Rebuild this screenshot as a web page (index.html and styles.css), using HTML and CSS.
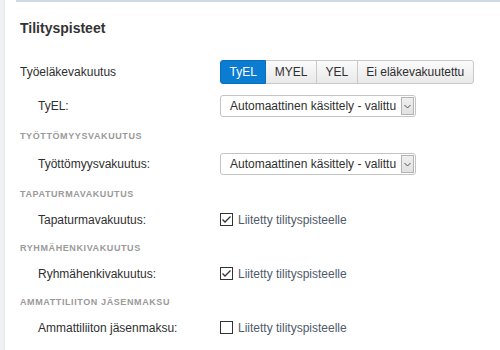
FILE: index.html
```html
<!DOCTYPE html>
<html lang="fi">
<head>
  <meta charset="UTF-8">
  <title>Tilityspisteet</title>
  <link rel="stylesheet" href="styles.css">
</head>
<body>

<div class="page">
  <div class="rail"></div>

  <div class="panel">
    <h3>Tilityspisteet</h3>

    <div class="row first">
      <span class="lbl">Työeläkevakuutus</span>
      <div class="btn-group">
        <button class="active">TyEL</button>
        <button>MYEL</button>
        <button>YEL</button>
        <button>Ei eläkevakuutettu</button>
      </div>
    </div>

    <div class="row sel">
      <span class="lbl sub">TyEL:</span>
      <div class="select">
        <span class="select-text">Automaattinen käsittely - valittu</span>
        <span class="select-arrow">
          <svg width="7" height="5" viewBox="0 0 7 5"><polyline points="0.5,1 3.5,4 6.5,1" fill="none" stroke="#555" stroke-width="1"/></svg>
        </span>
      </div>
    </div>

    <div class="section">Työttömyysvakuutus</div>
    <div class="row sel">
      <span class="lbl sub">Työttömyysvakuutus:</span>
      <div class="select">
        <span class="select-text">Automaattinen käsittely - valittu</span>
        <span class="select-arrow">
          <svg width="7" height="5" viewBox="0 0 7 5"><polyline points="0.5,1 3.5,4 6.5,1" fill="none" stroke="#555" stroke-width="1"/></svg>
        </span>
      </div>
    </div>

    <div class="section">Tapaturmavakuutus</div>
    <div class="row chk">
      <span class="lbl sub">Tapaturmavakuutus:</span>
      <span class="box"><svg width="11" height="11" viewBox="0 0 11 11"><polyline points="1.5,5.5 4,8 9.5,2.5" fill="none" stroke="#333" stroke-width="1.3"/></svg></span>
      <span class="chk-text">Liitetty tilityspisteelle</span>
    </div>

    <div class="section">Ryhmähenkivakuutus</div>
    <div class="row chk">
      <span class="lbl sub">Ryhmähenkivakuutus:</span>
      <span class="box"><svg width="11" height="11" viewBox="0 0 11 11"><polyline points="1.5,5.5 4,8 9.5,2.5" fill="none" stroke="#333" stroke-width="1.3"/></svg></span>
      <span class="chk-text">Liitetty tilityspisteelle</span>
    </div>

    <div class="section">Ammattiliiton jäsenmaksu</div>
    <div class="row chk">
      <span class="lbl sub">Ammattiliiton jäsenmaksu:</span>
      <span class="box"></span>
      <span class="chk-text">Liitetty tilityspisteelle</span>
    </div>
  </div>
</div>

</body>
</html>
```

FILE: styles.css
```css
body {
  margin: 0;
  font-family: "Liberation Sans", Arial, sans-serif;
  font-size: 12px;
  color: #2f2f2f;
  background: #fff;
}
.page {
  display: flex;
  height: 350px;
  overflow: hidden;
}
.rail {
  width: 4px;
  background-color: #eef2f5;
  border-right: 1px solid #e2e7eb;
}
.panel {
  flex: 1;
  margin-left: 11px;
  border-top: 2px solid #cfdbe4;
  padding: 18px 0 0 4px;
}
h3 {
  margin: 0;
  font-size: 14px;
  line-height: 16px;
  font-weight: bold;
  color: #333;
}
.row {
  display: flex;
  align-items: center;
}
.row.first {
  margin-top: 24px;
  height: 24px;
}
.row.sel {
  height: 22px;
  margin-top: 11px;
  margin-bottom: 13px;
}
.row.chk {
  height: 18px;
  margin-top: 11px;
  margin-bottom: 13px;
}
.lbl {
  width: 200px;
  flex-shrink: 0;
}
.lbl.sub {
  width: 182px;
  padding-left: 18px;
}
.btn-group {
  display: flex;
}
.btn-group button {
  font-family: inherit;
  font-size: 12px;
  line-height: 14px;
  height: 24px;
  padding: 4px 8.5px;
  margin: 0;
  margin-left: -1px;
  color: #2f2f2f;
  background: linear-gradient(#fbfbfb, #e9e9e9);
  border: 1px solid #c9c9c9;
  border-radius: 0;
}
.btn-group button:first-child {
  margin-left: 0;
  border-radius: 3px 0 0 3px;
}
.btn-group button:last-child {
  border-radius: 0 3px 3px 0;
}
.btn-group button.active {
  background: #0a7dd2;
  border-color: #086fbb;
  color: #fff;
  position: relative;
}
.select {
  display: flex;
  align-items: center;
  width: 196px;
  height: 22px;
  box-sizing: border-box;
  border: 1px solid #c4c4c4;
  border-radius: 3px;
  background: #fff;
}
.select-text {
  flex: 1;
  overflow: hidden;
  white-space: nowrap;
  padding-left: 9px;
  margin-right: 4px;
}
.select-arrow {
  width: 11px;
  height: 16px;
  margin-right: 1px;
  display: flex;
  align-items: center;
  justify-content: center;
  border: 1px solid #b3b3b3;
  background: linear-gradient(#efefef, #e1e1e1);
}
.section {
  font-size: 9px;
  line-height: 12px;
  font-weight: bold;
  letter-spacing: 0.6px;
  text-transform: uppercase;
  color: #9a9a9a;
}
.box {
  width: 13px;
  height: 13px;
  box-sizing: border-box;
  border: 1px solid #333;
  background: #fff;
  display: flex;
  align-items: center;
  justify-content: center;
  margin-top: -1px;
}
.chk-text {
  margin-left: 5px;
  color: #505a6a;
}
```
